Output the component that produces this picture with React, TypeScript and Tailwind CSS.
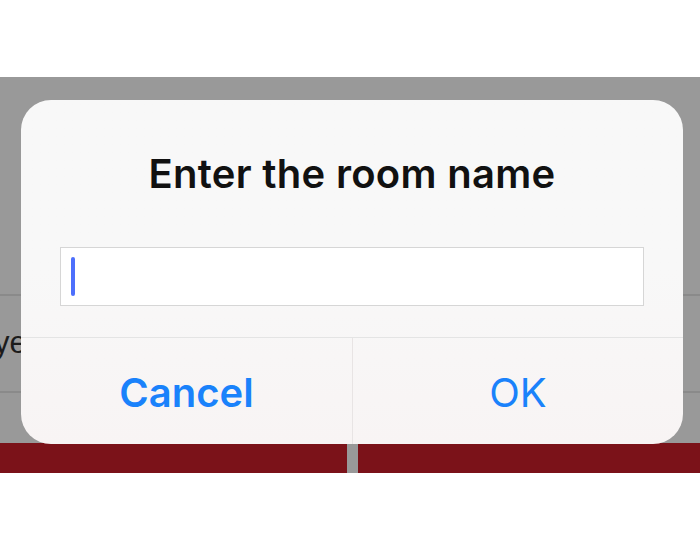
const font = { fontFamily: '"Inter", "Liberation Sans", sans-serif' };

const PromptDialog = () => {
  return (
    <div
      className="absolute left-[21px] top-[100px] w-[662px] h-[344px] rounded-[30px] bg-linear-to-b from-[#f8f8f8] via-[#f8f8f8] to-[#f8f4f4] flex flex-col overflow-hidden"
      style={font}
    >
      <h2 className="mt-[54px] h-[40px] leading-none text-[40px] font-semibold text-[#111111] text-center tracking-[0.3px]">
        Enter the room name
      </h2>

      {/* text field with caret */}
      <div className="mt-[53px] mx-[39px] h-[59px] bg-white border border-[#d6d6d6] flex items-center pl-[10px]">
        <span className="block w-[4px] h-[39px] rounded-full bg-[#4d6ffc]" />
      </div>

      <div className="mt-[31px] flex-1 grid grid-cols-2 border-t border-[#e4e4e4]">
        <button className="flex items-center justify-center pt-[3px] text-[40px] leading-none font-semibold text-[#1a82fb]">
          Cancel
        </button>
        <button className="flex items-center justify-center pt-[3px] border-l border-[#e8e4e4] text-[40px] leading-none font-normal text-[#1a82fb]">
          OK
        </button>
      </div>
    </div>
  );
};

export default function App() {
  return (
    <div className="relative w-[700px] h-[550px] bg-white overflow-hidden">
      <div className="h-[77px]" />

      {/* dimmed page behind the alert */}
      <div className="h-[396px] bg-[#999999] flex flex-col">
        <div className="h-[217px]" />
        <div className="h-[97px] border-t-2 border-[#8a8a8a] flex items-center">
          <span
            className="ml-[-6px] text-[31px] text-[#1c1c1c] whitespace-nowrap"
            style={{ fontFamily: '"Liberation Sans", sans-serif' }}
          >
            ye
          </span>
        </div>
        <div className="h-[52px] border-t-2 border-[#8a8a8a]" />
        <div className="flex-1 flex gap-[11px]">
          <div className="w-[347px] bg-[#7b1219]" />
          <div className="flex-1 bg-[#7b1219]" />
        </div>
      </div>

      <PromptDialog />
    </div>
  );
}
